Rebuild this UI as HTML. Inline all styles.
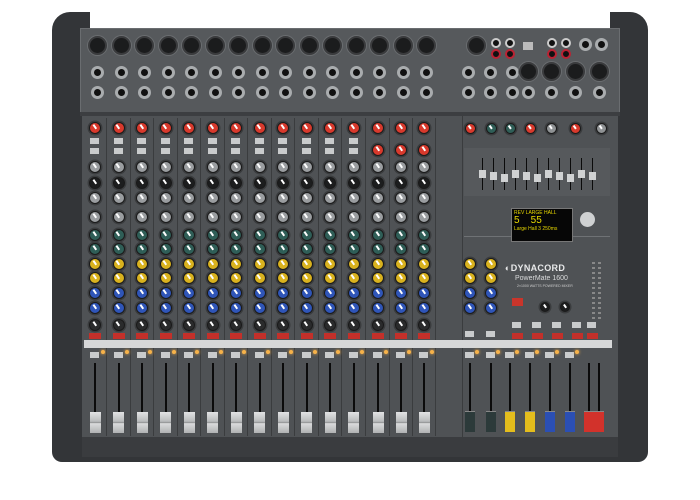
<!DOCTYPE html>
<html><head><meta charset="utf-8">
<style>
*{margin:0;padding:0;box-sizing:border-box}
body{width:700px;height:500px;background:#fff;position:relative;overflow:hidden;font-family:"Liberation Sans",sans-serif}
.a{position:absolute}
.k{position:absolute;border-radius:50%;border:1px solid #1a1a1a;box-shadow:0 0 0 1.5px #3a3c3e}
.k:after{content:"";position:absolute;left:45%;top:8%;width:1.5px;height:45%;background:#fff;transform:rotate(-35deg);transform-origin:bottom}
.xlr{position:absolute;width:19px;height:19px;border-radius:50%;background:#1b1c1d;border:2px solid #3a3b3d;box-shadow:0 0 0 1px #6a6d70}
.jk{position:absolute;width:13px;height:13px;border-radius:50%;background:#111;border:3px solid #a9acae}
.btn{position:absolute;width:9px;height:6px;background:#c9cbcc}
.led{position:absolute;width:4px;height:4px;border-radius:50%;background:#f6b24a;box-shadow:0 0 3px #ffb040}
.trk{position:absolute;width:2px;background:#0b0b0b}
.cap{position:absolute;width:11px;height:21px;background:linear-gradient(#e2e3e4,#b9bbbc 45%,#8a8c8d 50%,#dadbdc 55%,#b0b2b3)}
.vl{position:absolute;width:1px;background:#3a3c3e}
</style></head><body>
<div class="a" style="left:52px;top:12px;width:596px;height:450px;background:#333538;border-radius:18px 18px 10px 10px"></div>
<div class="a" style="left:90px;top:12px;width:520px;height:16px;background:#fff"></div>
<div class="a" style="left:80px;top:28px;width:540px;height:86px;background:#56595c;border:1px solid #6a6d70"></div>
<div class="a" style="left:80px;top:112px;width:540px;height:4px;background:#3c3e41"></div>
<div class="a" style="left:82px;top:116px;width:536px;height:322px;background:#4f5255"></div>
<div class="a" style="left:82px;top:437px;width:536px;height:20px;background:#3a3c3f"></div>
<div class="a" style="left:462px;top:116px;width:1px;height:322px;background:#3a3c3e"></div>
<div class="a" style="left:464px;top:148px;width:146px;height:48px;background:#56595c"></div>
<div class="a" style="left:464px;top:236px;width:146px;height:1px;background:#6f7275"></div>
<div class="a" style="left:511px;top:208px;width:62px;height:34px;background:#060606;border:1px solid #777"></div>
<div class="a" style="left:514px;top:210px;font-size:5px;color:#e8d800;line-height:7px;width:58px">REV LARGE HALL<br><span style="font-size:10px">5 &nbsp;&nbsp;&nbsp;55</span><br>Large Hall 3 250ms</div>
<div class="a" style="left:580px;top:212px;width:15px;height:15px;border-radius:50%;background:#cfd1d2"></div>
<div class="a" style="left:505px;top:263px;font-size:9px;font-weight:bold;color:#e8e9ea;letter-spacing:.3px">◐DYNACORD</div>
<div class="a" style="left:515px;top:275px;font-size:7px;color:#d8d9da">PowerMate 1600</div>
<div class="a" style="left:517px;top:284px;font-size:3.5px;color:#ccc">2×1000 WATTS POWERED MIXER</div>
<div class="a" style="left:512px;top:298px;width:11px;height:8px;background:#c9352b"></div>
<div id="g"></div>
<script>
var h='';
function A(s){h+=s}
for(var i=0;i<15;i++){var x=97+i*23.5;A('<div class="xlr" style="left:'+(x-9)+'px;top:36px"></div>');
A('<div class="jk" style="left:'+(x-6)+'px;top:66px"></div><div class="jk" style="left:'+(x-6)+'px;top:86px"></div>');}
A('<div class="xlr" style="left:467px;top:36px"></div>');
[468,490,512].forEach(function(x){A('<div class="jk" style="left:'+(x-6)+'px;top:66px"></div><div class="jk" style="left:'+(x-6)+'px;top:86px"></div>')});
[496,510,552,566].forEach(function(x){A('<div class="jk" style="left:'+(x-5)+'px;top:38px;width:10px;height:10px;border-width:2px;border-color:#ccc"></div><div class="jk" style="left:'+(x-5)+'px;top:49px;width:10px;height:10px;border-width:2px;border-color:#b23"></div>')});
A('<div class="a" style="left:523px;top:42px;width:10px;height:8px;background:#bbb"></div>');
[585,601].forEach(function(x){A('<div class="jk" style="left:'+(x-6)+'px;top:38px"></div>')});
[528,551,575,599].forEach(function(x){A('<div class="xlr" style="left:'+(x-9)+'px;top:62px"></div><div class="jk" style="left:'+(x-6)+'px;top:86px"></div>')});
var cols=[];for(i=0;i<12;i++)cols.push(95+i*23.5);cols.push(378,401,424);
cols.forEach(function(x,ci){
 A('<div class="vl" style="left:'+(x+11)+'px;top:118px;height:318px"></div>');
 function K(y,c,s){s=s||12;A('<div class="k" style="left:'+(x-s/2)+'px;top:'+(y-s/2)+'px;width:'+s+'px;height:'+s+'px;background:'+c+'"></div>')}
 if(ci<12){K(128,'#d8392c');A('<div class="btn" style="left:'+(x-5)+'px;top:138px"></div><div class="btn" style="left:'+(x-5)+'px;top:148px"></div>');}
 else{K(128,'#d8392c');K(150,'#d8392c');}
 K(167,'#9a9da0');K(183,'#1c1d1e');K(198,'#9a9da0');K(217,'#9a9da0');
 K(235,'#2f5e57');K(249,'#2f5e57');K(264,'#d9b21e');K(278,'#d9b21e');K(293,'#2f55b8');K(308,'#2f55b8');K(325,'#2a2b2c');
 A('<div class="a" style="left:'+(x-6)+'px;top:333px;width:12px;height:6px;background:#c3302a"></div>');
 A('<div class="btn" style="left:'+(x-5)+'px;top:352px"></div><div class="led" style="left:'+(x+6)+'px;top:350px"></div>');
 A('<div class="trk" style="left:'+(x-1)+'px;top:363px;height:68px"></div><div class="cap" style="left:'+(x-5.5)+'px;top:412px"></div>');
});
A('<div class="a" style="left:84px;top:340px;width:528px;height:8px;background:#d6d7d8"></div>');
var mc=[[470,'#2c3a3a'],[491,'#2c3a3a'],[510,'#e4bd1d'],[530,'#e4bd1d'],[550,'#2b4fb4'],[570,'#2b4fb4'],[589,'#d2322b'],[599,'#d2322b']];
mc.forEach(function(m,i){var x=m[0];
 A('<div class="trk" style="left:'+(x-1)+'px;top:363px;height:68px"></div><div class="a" style="left:'+(x-5)+'px;top:411px;width:10px;height:21px;background:'+m[1]+';border-top:1px solid #888"></div>');
 if(i<6){A('<div class="btn" style="left:'+(x-5)+'px;top:352px"></div><div class="led" style="left:'+(x+5)+'px;top:350px"></div>');}
});
[470,491].forEach(function(x){[264,278,293,308].forEach(function(y,j){var c=j<2?'#d9b21e':'#2f55b8';A('<div class="k" style="left:'+(x-6)+'px;top:'+(y-6)+'px;width:12px;height:12px;background:'+c+'"></div>')});
 A('<div class="btn" style="left:'+(x-5)+'px;top:331px"></div>')});
[517,537,557,577,592].forEach(function(x,i){A('<div class="a" style="left:'+(x-5)+'px;top:333px;width:11px;height:6px;background:#c3302a"></div><div class="btn" style="left:'+(x-5)+'px;top:322px"></div>')});
[545,565].forEach(function(x){A('<div class="k" style="left:'+(x-5)+'px;top:302px;width:10px;height:10px;background:#1c1d1e"></div>')});
[[470,'#d8392c'],[491,'#2f5e57'],[510,'#2f5e57'],[530,'#d8392c'],[551,'#8f9294'],[575,'#d8392c'],[601,'#8f9294']].forEach(function(m){A('<div class="k" style="left:'+(m[0]-5)+'px;top:123px;width:11px;height:11px;background:'+m[1]+'"></div>')});
for(i=0;i<11;i++){var x=482+i*11;A('<div class="trk" style="left:'+x+'px;top:158px;height:32px;width:1px"></div><div class="a" style="left:'+(x-3)+'px;top:'+(170+(i%3)*2)+'px;width:7px;height:8px;background:#d0d2d3"></div>')}
for(i=0;i<12;i++)A('<div class="a" style="left:592px;top:'+(262+i*5)+'px;width:3px;height:2px;background:#888"></div><div class="a" style="left:598px;top:'+(262+i*5)+'px;width:3px;height:2px;background:#888"></div>');
document.getElementById('g').innerHTML=h;
</script>
</body></html>
